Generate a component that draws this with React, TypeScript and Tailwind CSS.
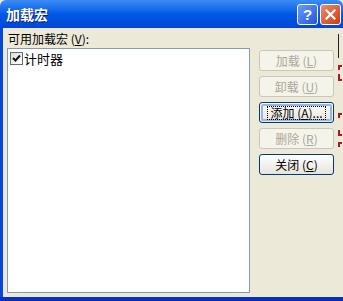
import React from 'react'

const FONT = { fontFamily: '"Noto Sans CJK SC", "Liberation Sans", sans-serif' }

function XpButton({ label, disabled, focused }: { label: React.ReactNode; disabled?: boolean; focused?: boolean }) {
  if (disabled) {
    return (
      <div className="w-[75px] h-[21px] rounded-[3px] border border-[#c9c7ba] bg-[#f5f4ea] text-[#aca899] text-[12px] leading-none flex items-center justify-center">
        {label}
      </div>
    )
  }
  return (
    <div className="w-[75px] h-[21px] rounded-[3px] border border-[#003c74] bg-gradient-to-b from-white to-[#e6e4dc] text-black text-[12px] leading-none flex items-center justify-center p-[1px]">
      <div
        className={
          focused
            ? 'w-full h-full rounded-[2px] border-2 border-[#98b4e8] flex items-center justify-center'
            : 'w-full h-full flex items-center justify-center'
        }
      >
        <span className={focused ? 'outline-1 outline-dotted outline-black px-[2px]' : ''}>{label}</span>
      </div>
    </div>
  )
}

export default function App() {
  return (
    <div className="w-[343px] h-[301px] flex flex-col overflow-hidden bg-[#ece9d8]" style={FONT}>
      {/* Title bar */}
      <div className="h-[28px] shrink-0 flex items-center justify-between pl-[6px] pr-[2px] bg-gradient-to-b from-[#3b8cf5] via-[#0058e6] to-[#0046d6] rounded-t-[6px]">
        <span className="text-white font-bold text-[14px] [text-shadow:1px_1px_0_#0a1e6a]">加载宏</span>
        <div className="flex gap-[2px]">
          <div className="w-[21px] h-[21px] rounded-[3px] border border-white bg-gradient-to-br from-[#6d9bf8] to-[#1f55d8] flex items-center justify-center text-white font-bold text-[15px] leading-none" style={{ fontFamily: '"Liberation Sans", sans-serif' }}>
            ?
          </div>
          <div className="w-[21px] h-[21px] rounded-[3px] border border-white bg-gradient-to-br from-[#f08a6a] to-[#c5390f] flex items-center justify-center">
            <svg width="11" height="11" viewBox="0 0 11 11">
              <path d="M1.5 1.5 L9.5 9.5 M9.5 1.5 L1.5 9.5" stroke="white" strokeWidth="2.2" strokeLinecap="square" />
            </svg>
          </div>
        </div>
      </div>

      {/* Body */}
      <div className="flex-1 flex min-h-0">
        <div className="w-[3px] bg-[#0846d8] shrink-0" />
        <div className="flex-1 flex pl-[4px] pt-[3px] pb-[4px]">
          <div className="flex flex-col w-[243px]">
            <div className="text-[12px] text-black leading-[16px] h-[17px] pl-[1px]">可用加载宏 (<u>V</u>):</div>
            <div className="flex-1 bg-white border border-[#7f9db9] pt-[2px] pl-[2px]">
              <div className="flex items-center gap-[1px] h-[14px]">
                <div className="w-[13px] h-[13px] border border-[#6b6b6b] bg-gradient-to-br from-[#dcdcd7] to-white flex items-center justify-center">
                  <svg width="9" height="9" viewBox="0 0 9 9">
                    <path d="M1 4 L3.5 6.5 L8 1.5" stroke="#111" strokeWidth="2" fill="none" />
                  </svg>
                </div>
                <span className="text-[13px] leading-none text-black">计时器</span>
              </div>
            </div>
          </div>
          <div className="flex flex-col gap-[5px] pl-[9px] pt-[19px]">
            <XpButton label={<>加载 (<u>L</u>)</>} disabled />
            <XpButton label={<>卸载 (<u>U</u>)</>} disabled />
            <XpButton label={<>添加 (<u>A</u>)...</>} focused />
            <XpButton label={<>删除 (<u>R</u>)</>} disabled />
            <XpButton label={<>关闭 (<u>C</u>)</>} />
          </div>
          <div className="flex-1" />
          {/* fragments of the window behind */}
          <div className="w-[5px] shrink-0 flex flex-col pt-[3px]">
            <div className="h-[24px] border-l border-[#222]" />
            <div className="h-[5px] w-[4px] border-t-2 border-l-2 border-[#b01818] mt-[7px]" />
            <div className="h-[7px] w-[4px] border-l-2 border-b-2 border-[#b01818] mt-[4px]" />
            <div className="h-[5px] w-[4px] border-t-2 border-l-2 border-[#b01818] mt-[32px]" />
            <div className="h-[6px] w-[4px] border-l-2 border-b-2 border-[#b01818] mt-[12px]" />
            <div className="h-[5px] w-[4px] border-t-2 border-l-2 border-[#b01818] mt-[6px]" />
          </div>
        </div>
      </div>
      <div className="h-[4px] shrink-0 bg-[#0831b8]" />
    </div>
  )
}
